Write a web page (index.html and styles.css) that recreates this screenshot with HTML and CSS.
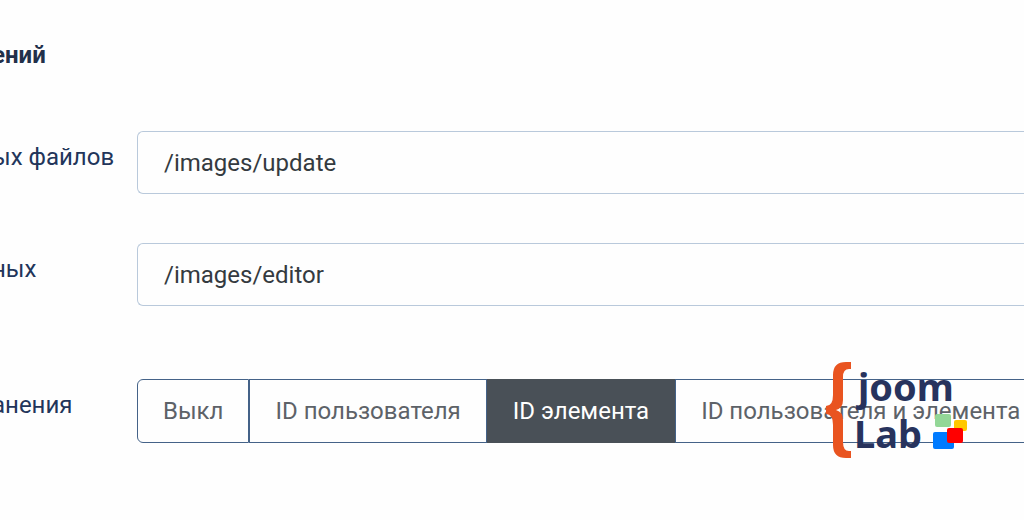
FILE: index.html
```
<!DOCTYPE html>
<html lang="ru">
<head>
  <meta charset="UTF-8">
  <meta name="viewport" content="width=device-width, initial-scale=1.0">
  <title>joomLab</title>
  <link rel="stylesheet" href="styles.css">
</head>
<body>
  <form class="settings">
    <h2 class="title">ений</h2>

    <div class="row">
      <label class="name" for="files">ых файлов</label>
      <input class="field" type="text" id="files" value="/images/update">
    </div>

    <div class="row">
      <label class="name" for="editor">ных</label>
      <input class="field" type="text" id="editor" value="/images/editor">
    </div>

    <div class="row row-group" role="radiogroup" aria-labelledby="mode">
      <span class="name" id="mode">анения</span>
      <div class="group">
        <input type="radio" name="mode" id="mode0">
        <label class="btn btn-first" for="mode0">Выкл</label>
        <input type="radio" name="mode" id="mode1">
        <label class="btn" for="mode1">ID пользователя</label>
        <input type="radio" name="mode" id="mode2" checked>
        <label class="btn" for="mode2">ID элемента</label>
        <input type="radio" name="mode" id="mode3">
        <label class="btn btn-last" for="mode3">ID пользователя и элемента</label>
      </div>
    </div>
  </form>

  <svg class="logo" width="144" height="98" viewBox="0 0 144 98">
    <path fill="#e95420" d="M26 1v7h-2q-6 0-6 8v23q0 8-7 10q7 2 7 10v22q0 9 6 9h2v7h-5Q8 97 8 84V64q0-11-7-11v-8q7 0 7-11V14Q8 1 21 1z"/>
    <text class="logo-text" x="33" y="40">joom</text>
    <text class="logo-text" x="29" y="87">Lab</text>
    <rect x="129" y="59" width="13" height="11" rx="2" fill="#ffc800"/>
    <rect x="110" y="53" width="16" height="13" rx="2" fill="#93d797"/>
    <rect x="108" y="71" width="21" height="17" rx="2" fill="#007bff"/>
    <rect x="122" y="67" width="16" height="15" rx="2" fill="#ff0000"/>
  </svg>
</body>
</html>
```

FILE: styles.css
```
* {
  box-sizing: border-box;
}
body {
  font-family: Roboto, sans-serif;
  font-size: 24px;
  line-height: 32px;
  background-color: #fefefe;
  color: #22355a;
  margin: 0;
  overflow: hidden;
}
.settings {
  margin-left: -8px;
  padding-top: 39px;
}
.title {
  font-size: 24px;
  line-height: 32px;
  font-weight: bold;
  color: #22304a;
  margin: 0 0 60px;
}
.row {
  display: flex;
  align-items: flex-start;
  margin-bottom: 49px;
}
.row-group {
  margin-top: 73px;
}
.name {
  flex: none;
  width: 145px;
  padding-top: 10px;
}
.field {
  flex: 1;
  min-width: 0;
  height: 63px;
  padding: 0 26px;
  font: inherit;
  color: #343a40;
  background-color: #fefefe;
  border: 1px solid #b9c9db;
  border-right: 0;
  border-radius: 6px 0 0 6px;
}
.group {
  display: flex;
  flex: 1;
  min-width: 0;
}
.group input {
  appearance: none;
  width: 0;
  height: 0;
  margin: 0;
}
.btn {
  flex: none;
  padding: 15px 25px;
  color: #5d6268;
  border: 1px solid #446288;
  white-space: nowrap;
}
.btn-first {
  border-radius: 6px 0 0 6px;
}
.btn-last {
  flex-grow: 1;
  border-right: 0;
}
.group input:checked + .btn {
  background-color: #495057;
  border-color: #495057;
  color: #fff;
}
.logo {
  position: absolute;
  left: 825px;
  top: 361px;
}
.logo-text {
  font-family: "Noto Sans", sans-serif;
  font-size: 38px;
  font-weight: bold;
  fill: #27335d;
}
```
